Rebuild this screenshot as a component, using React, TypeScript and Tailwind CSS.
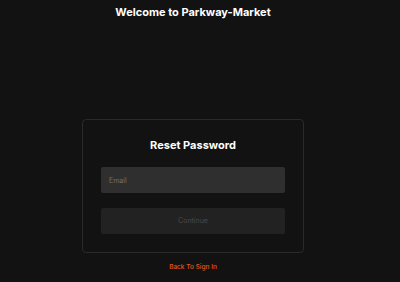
import { useState } from 'react';

export default function App() {
  const [email, setEmail] = useState('');

  return (
    <div
      className="min-h-[282px] w-full bg-[#121212] flex flex-col items-center pr-[14px]"
      style={{ fontFamily: 'Inter, "Noto Sans", sans-serif' }}
    >
      {/* header */}
      <h1 className="mt-[5px] text-[11px] leading-[15px] font-bold text-white">
        Welcome to Parkway-Market
      </h1>

      {/* card */}
      <div className="mt-[99px] w-[222px] rounded-[4px] border border-[#2a2a2a] bg-[#121212] px-[18px] pt-[17px] pb-[18px]">
        <h2 className="text-center text-[11px] leading-[16px] font-bold text-white">
          Reset Password
        </h2>
        <input
          value={email}
          onChange={(e) => setEmail(e.target.value)}
          placeholder="Email"
          className="mt-[14px] block w-full h-[26px] rounded-[2px] bg-[#2f2f2f] px-[8px] text-[7px] text-white placeholder:text-[#707070] outline-none"
        />
        <button
          disabled
          className="mt-[15px] block w-full h-[26px] rounded-[2px] bg-[#222222] text-[7px] text-[#4a4a4a]"
        >
          Continue
        </button>
      </div>

      <a className="mt-[10px] text-[6.5px] leading-[9px] font-medium text-[#e4581c]">
        Back To Sign In
      </a>
    </div>
  );
}
